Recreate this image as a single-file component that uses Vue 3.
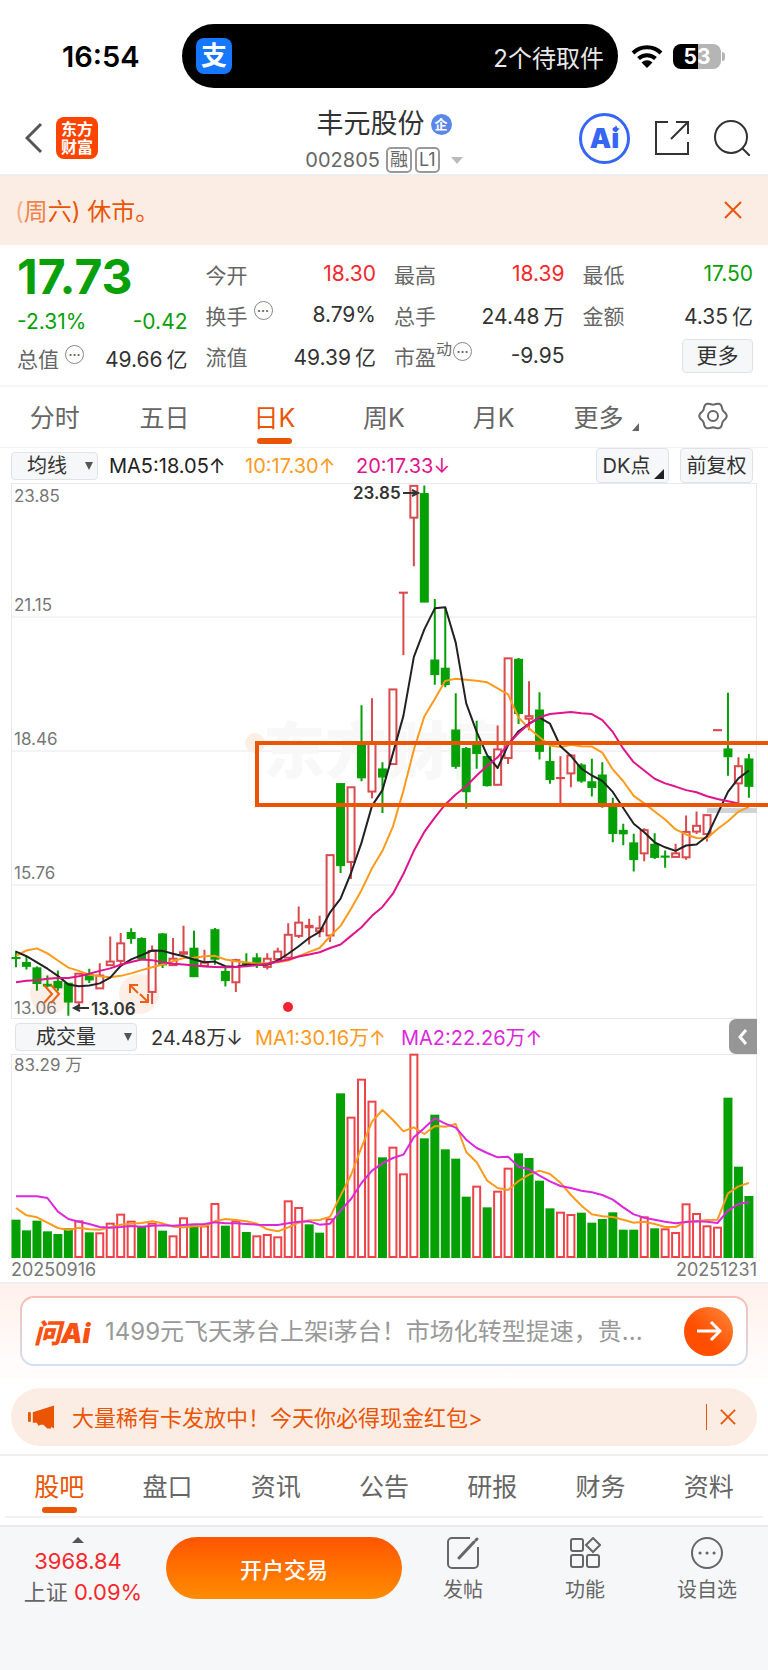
<template>
  <div class="page">
    <div class="status-bar">
      <span class="time">16:54</span>
      <div class="island">
        <span class="alipay">支</span>
        <span>2个待取件</span>
      </div>
      <svg class="wifi" viewBox="0 0 32 24">
        <path d="M2 9a20 20 0 0 1 28 0" />
        <path d="M7.500 14.500a12.500 12.500 0 0 1 17 0" />
        <path class="fill" d="M10.500 18.500a8 8 0 0 1 11 0L16 24z" />
      </svg>
      <div class="battery"><span>53</span></div>
    </div>

    <header class="nav">
      <div class="nav-side left">
        <button class="plain" aria-label="返回">
          <svg class="back" viewBox="0 0 18 32"><path d="M16 2 2 16l14 14" /></svg>
        </button>
        <div class="logo"><span>东方</span><span>财富</span></div>
      </div>
      <div class="nav-title">
        <h1>丰元股份<i class="badge">企</i></h1>
        <p>002805<span class="tag first">融</span><span class="tag">L1</span><i class="caret"></i></p>
      </div>
      <div class="nav-side right">
        <button class="plain ai" aria-label="Ai">
          <span>Ai</span>
          <svg viewBox="0 0 8 8"><path d="M4 0 5.200 2.800 8 4 5.200 5.200 4 8 2.800 5.200 0 4 2.800 2.800z" /></svg>
        </button>
        <button class="plain" aria-label="分享">
          <svg class="nav-icon" viewBox="0 0 36 36">
            <path d="M14 2H2v32h32V22M22 2h12v12M34 2 17 19" />
          </svg>
        </button>
        <button class="plain" aria-label="搜索">
          <svg class="nav-icon" viewBox="0 0 36 36">
            <circle cx="17" cy="17" r="16" /><path d="m28 28 8 8" />
          </svg>
        </button>
      </div>
    </header>

    <div class="notice">
      <p><span class="fade1">(</span><span class="fade2">周</span>六) 休市。</p>
      <button class="plain" aria-label="关闭">
        <svg class="close" viewBox="0 0 18 18"><path d="m1 1 16 16M17 1 1 17" /></svg>
      </button>
    </div>

    <section class="quote">
      <div class="quote-main">
        <strong>17.73</strong>
        <div class="cell green"><span>-2.31%</span><span>-0.42</span></div>
        <div class="cell">
          <label>总值<i class="dots">···</i></label>
          <span>49.66<b>亿</b></span>
        </div>
      </div>
      <div class="quote-grid">
        <div v-for="q in quotes" :key="q.label" class="cell">
          <label>{{ q.label }}<sup v-if="q.sup">{{ q.sup }}</sup><i v-if="q.dots" class="dots">···</i></label>
          <span :class="q.color">{{ q.value }}<b v-if="q.unit">{{ q.unit }}</b></span>
        </div>
        <button class="more">更多</button>
      </div>
    </section>

    <nav class="tabs period">
      <button v-for="t in periods" :key="t" class="plain" :class="{ active: t === period }" @click="period = t">
        {{ t }}<i v-if="t === '更多'" class="corner"></i>
      </button>
      <button class="plain" aria-label="设置">
        <svg class="gear" viewBox="0 0 30 30">
          <polygon :points="gear" />
          <circle cx="15" cy="15" r="5" />
        </svg>
      </button>
    </nav>

    <div class="legend">
      <div class="picker">
        <select aria-label="指标"><option>均线</option></select>
      </div>
      <span class="ma5">MA5:18.05↑</span>
      <span class="ma10">10:17.30↑</span>
      <span class="ma20">20:17.33↓</span>
      <div class="legend-buttons">
        <button class="dk">DK点<i class="corner"></i></button>
        <button>前复权</button>
      </div>
    </div>

    <svg class="kline" viewBox="0 0 746 536">
      <g class="grid">
        <path v-for="n in 3" :key="n" :d="`M0 ${n * 134}H746`" />
        <rect x="0.500" y="0.500" width="745" height="535" />
      </g>
      <circle class="halo" cx="244" cy="260" r="10" />
      <circle class="halo" cx="39" cy="511" r="20" />
      <circle class="halo" cx="128" cy="511" r="20" />
      <text class="watermark" x="252" y="291">东方财富</text>
      <rect class="gap-zone" x="696" y="325" width="50" height="5" />

      <g class="price">
        <text v-for="(p, n) in prices" :key="p" x="3" :y="priceY[n]">{{ p }}</text>
      </g>

      <g v-for="(c, i) in candles" :key="i" :class="c[0] === 'r' ? 'up' : 'down'">
        <path :d="`M${x(i)} ${y(c[1])}V${y(c[2])}M${x(i)} ${y(c[3])}V${y(c[4])}`" />
        <rect :x="x(i) - 3.500" :y="y(c[2])" width="7" :height="Math.max(y(c[3]) - y(c[2]), 0.100)" />
      </g>

      <polyline class="line10" :points="line(ma10, y)" />
      <polyline class="line5" :points="line(ma5, y)" />
      <polyline class="line20" :points="line(ma20, y)" />

      <g class="mark">
        <text x="342" y="16">23.85</text>
        <path d="M392 10h14m-5-3 6 3-6 3" />
        <text x="80" y="532">13.06</text>
        <path d="M78 525H64m5-3-6 3 6 3" />
      </g>
      <g class="tool">
        <path d="m33 502 8 9-8 9M40 502l8 9-8 9" />
        <path d="M119 510v-8h8M119 502l8 8M137 511v8h-8M137 519l-8-8" />
      </g>
      <circle class="event" cx="277" cy="524" r="5" />
      <path class="box" d="M757 260H246v62h511" />
    </svg>

    <div class="legend volume">
      <div class="picker wide">
        <select aria-label="副图指标"><option>成交量</option></select>
      </div>
      <span class="vol">24.48万↓</span>
      <span class="ma10">MA1:30.16万↑</span>
      <span class="vol-ma2">MA2:22.26万↑</span>
      <button class="collapse" aria-label="收起">
        <svg viewBox="0 0 10 16"><path d="M8 1 2 8l6 7" /></svg>
      </button>
    </div>

    <svg class="kline" viewBox="0 0 746 204">
      <g class="grid"><rect x="0.500" y="0.500" width="745" height="203" /></g>
      <text class="max" x="3" y="17">83.29 万</text>
      <g v-for="(v, i) in volumes" :key="i" :class="v[0] === 'r' ? 'vol-up' : 'vol-down'">
        <rect :x="x(i) - 3.500" :y="vy(v[1])" width="7" :height="203 - vy(v[1])" />
      </g>
      <polyline class="line10" :points="line(volMa1, vy)" />
      <polyline class="line-vol" :points="line(volMa2, vy)" />
    </svg>
    <div class="dates"><span>20250916</span><span>20251231</span></div>

    <section class="ask">
      <div class="ask-box">
        <span class="ask-logo">问Ai</span>
        <input type="text" aria-label="问Ai" placeholder="1499元飞天茅台上架i茅台！市场化转型提速，贵..." />
        <button aria-label="发送">
          <svg viewBox="0 0 26 22"><path d="M1 11h23M15 2l9 9-9 9" /></svg>
        </button>
      </div>
    </section>

    <div class="promo-wrap">
      <div class="promo">
        <svg class="horn" viewBox="0 0 28 24">
          <path d="M0 7h3v10H0zM5 7 27 0v24l-3-2v2h-4l-4-4h-3l-2 1-2-3H5z" />
        </svg>
        <a href="#">大量稀有卡发放中！今天你必得现金红包&gt;</a>
        <button class="plain" aria-label="关闭">
          <svg class="close small" viewBox="0 0 18 18"><path d="m1 1 16 16M17 1 1 17" /></svg>
        </button>
      </div>
    </div>

    <nav class="tabs info">
      <button v-for="t in infos" :key="t" class="plain" :class="{ active: t === info }" @click="info = t">{{ t }}</button>
    </nav>

    <footer class="bottom">
      <div class="index">
        <i class="tri"></i>
        <span class="red point">3968.84</span>
        <span>上证 <em class="red">0.09%</em></span>
      </div>
      <button class="trade">开户交易</button>
      <div class="actions">
        <button class="plain">
          <svg viewBox="0 0 32 32">
            <path d="M23 1H5a4 4 0 0 0-4 4v22a4 4 0 0 0 4 4h22a4 4 0 0 0 4-4V10" />
            <path class="pen" d="m12 21 15-16M29 3l1-1" />
          </svg>
          发帖
        </button>
        <button class="plain">
          <svg viewBox="0 0 32 32">
            <rect x="2" y="2" width="12" height="12" rx="2" />
            <rect x="2" y="18" width="12" height="12" rx="2" />
            <rect x="18" y="18" width="12" height="12" rx="2" />
            <path d="m24 1 7 7-7 7-7-7z" />
          </svg>
          功能
        </button>
        <button class="plain">
          <svg viewBox="0 0 32 32">
            <circle cx="16" cy="16" r="15" />
            <path class="pen" d="M9 16h.1M16 16h.1M23 16h.1" />
          </svg>
          设自选
        </button>
      </div>
    </footer>
  </div>
</template>

<script setup>
import { ref } from 'vue';

const period = ref('日K');
const info = ref('股吧');
const periods = ['分时', '五日', '日K', '周K', '月K', '更多'];
const infos = ['股吧', '盘口', '资讯', '公告', '研报', '财务', '资料'];

const quotes = [
  { label: '今开', value: '18.30', color: 'red' },
  { label: '最高', value: '18.39', color: 'red' },
  { label: '最低', value: '17.50', color: 'green' },
  { label: '换手', value: '8.79%', dots: true },
  { label: '总手', value: '24.48', unit: '万' },
  { label: '金额', value: '4.35', unit: '亿' },
  { label: '流值', value: '49.39', unit: '亿' },
  { label: '市盈', value: '-9.95', sup: '动', dots: true }
];

const prices = ['23.85', '21.15', '18.46', '15.76', '13.06'];
const priceY = [19, 128, 262, 396, 531];

// color, high, body top, body bottom, low
const candles = [
  ['g', 1318, 1338, 1338, 1364], ['g', 1334, 1352, 1360, 1370], ['g', 1362, 1367, 1408, 1430], ['g', 1387, 1413, 1415, 1420],
  ['g', 1373, 1405, 1420, 1430], ['g', 1408, 1410, 1460, 1500], ['r', 1381, 1382, 1462, 1475], ['g', 1368, 1386, 1398, 1408],
  ['r', 1353, 1387, 1423, 1424], ['r', 1278, 1348, 1358, 1359], ['r', 1268, 1297, 1346, 1357], ['g', 1255, 1268, 1282, 1298],
  ['g', 1280, 1285, 1338, 1340], ['r', 1303, 1318, 1433, 1467], ['g', 1268, 1272, 1356, 1366], ['r', 1282, 1340, 1358, 1359],
  ['r', 1248, 1322, 1326, 1330], ['g', 1262, 1312, 1389, 1391], ['r', 1315, 1351, 1360, 1361], ['g', 1254, 1260, 1340, 1357],
  ['g', 1362, 1377, 1400, 1418], ['r', 1340, 1344, 1406, 1433], ['g', 1325, 1355, 1357, 1360], ['g', 1325, 1339, 1351, 1366],
  ['r', 1325, 1340, 1363, 1370], ['r', 1309, 1320, 1341, 1342], ['r', 1241, 1273, 1337, 1338], ['r', 1194, 1239, 1276, 1282],
  ['r', 1228, 1248, 1252, 1300], ['r', 1220, 1255, 1263, 1280], ['r', 1049, 1050, 1275, 1293], ['g', 849, 851, 1078, 1100],
  ['r', 859, 860, 1069, 1117], ['g', 630, 738, 832, 843], ['r', 611, 737, 872, 891], ['g', 790, 810, 830, 932],
  ['r', 585, 586, 795, 796], ['r', 315, 315, 315, 490], ['r', 15, 16, 105, 241], ['g', 15, 39, 340, 342],
  ['g', 333, 505, 543, 573], ['g', 357, 528, 571, 580], ['g', 597, 701, 800, 808], ['g', 747, 753, 871, 920],
  ['g', 674, 743, 764, 808], ['g', 773, 775, 854, 858], ['r', 687, 754, 853, 854], ['r', 498, 499, 778, 795],
  ['g', 498, 503, 652, 683], ['r', 563, 661, 668, 700], ['g', 594, 645, 758, 782], ['g', 745, 789, 837, 850],
  ['r', 773, 834, 834, 905], ['r', 768, 771, 821, 860], ['g', 793, 799, 841, 847], ['g', 780, 846, 859, 886],
  ['g', 790, 827, 907, 917], ['g', 889, 914, 988, 1014], ['g', 962, 982, 989, 1022], ['g', 990, 1017, 1061, 1096],
  ['r', 975, 980, 1045, 1067], ['g', 989, 1021, 1055, 1061], ['g', 1037, 1054, 1054, 1085], ['r', 1018, 1045, 1055, 1056],
  ['r', 939, 985, 1056, 1063], ['r', 928, 968, 984, 991], ['r', 937, 938, 991, 1012], ['r', 700, 700, 700, 700],
  ['g', 595, 754, 773, 828], ['r', 776, 801, 849, 908], ['g', 767, 782, 856, 889]
];

const ma5 = [
  1320, 1333, 1350, 1368, 1388, 1412, 1417, 1415, 1409, 1393, 1360, 1342, 1330, 1317, 1318, 1326, 1333, 1342, 1350, 1348,
  1361, 1363, 1357, 1357, 1357, 1345, 1326, 1305, 1282, 1265, 1210, 1172, 1100, 1015, 912, 868, 765, 660, 495, 418,
  359, 356, 455, 625, 705, 770, 806, 742, 703, 682, 665, 682, 745, 772, 808, 827, 842, 873, 918, 962,
  986, 1014, 1028, 1038, 1023, 1020, 997, 935, 873, 835, 813
];
const ma10 = [
  1332, 1317, 1311, 1325, 1345, 1365, 1374, 1385, 1389, 1392, 1388, 1381, 1372, 1364, 1356, 1347, 1338, 1337, 1333, 1332,
  1342, 1347, 1350, 1354, 1352, 1350, 1345, 1333, 1321, 1310, 1277, 1248, 1200, 1148, 1087, 1038, 970, 870, 755, 662,
  613, 562, 556, 559, 562, 566, 583, 600, 665, 695, 720, 743, 747, 741, 745, 746, 763, 810, 843, 884,
  905, 928, 950, 978, 992, 1002, 1003, 977, 955, 928, 915
];
const ma20 = [
  1406, 1402, 1400, 1396, 1394, 1394, 1389, 1382, 1374, 1367, 1357, 1349, 1342, 1344, 1350, 1354, 1356, 1359, 1362, 1363,
  1364, 1363, 1361, 1358, 1355, 1348, 1342, 1334, 1328, 1322, 1310, 1300, 1276, 1252, 1220, 1195, 1158, 1103, 1038, 985,
  945, 908, 880, 857, 827, 800, 776, 740, 708, 683, 664, 655, 652, 649, 653, 655, 672, 705, 752, 790,
  813, 836, 849, 858, 868, 874, 885, 893, 899, 905
];

const volumes = [
  ['g', 630], ['g', 662], ['g', 633], ['g', 665], ['g', 673], ['g', 656], ['r', 632], ['g', 668], ['r', 668], ['r', 639],
  ['r', 612], ['r', 633], ['g', 652], ['r', 639], ['g', 663], ['r', 677], ['r', 623], ['g', 647], ['r', 647], ['r', 580],
  ['g', 648], ['r', 632], ['g', 667], ['r', 677], ['r', 673], ['r', 680], ['r', 572], ['r', 592], ['g', 644], ['g', 669],
  ['r', 626], ['g', 251], ['r', 321], ['r', 207], ['r', 273], ['g', 443], ['r', 411], ['r', 491], ['r', 132], ['g', 386],
  ['g', 315], ['g', 419], ['g', 447], ['g', 561], ['r', 528], ['g', 593], ['r', 543], ['r', 474], ['g', 431], ['g', 445],
  ['g', 513], ['g', 596], ['r', 606], ['r', 613], ['g', 609], ['g', 639], ['g', 628], ['g', 608], ['g', 660], ['g', 660],
  ['r', 620], ['g', 656], ['r', 656], ['r', 667], ['r', 581], ['r', 610], ['r', 647], ['r', 651], ['g', 264], ['g', 471],
  ['g', 559]
];
const volMa1 = [
  592, 614, 620, 636, 652, 658, 651, 656, 657, 650, 642, 639, 637, 632, 638, 648, 650, 647, 647, 632,
  625, 628, 632, 639, 656, 662, 650, 636, 629, 628, 618, 555, 493, 410, 333, 298, 328, 362, 350, 370,
  346, 348, 340, 424, 455, 510, 532, 538, 511, 492, 480, 490, 516, 553, 585, 611, 617, 619, 627, 636,
  633, 640, 649, 649, 633, 632, 628, 627, 548, 527, 517
];
const volMa2 = [
  557, 557, 557, 562, 603, 625, 633, 640, 649, 651, 649, 646, 648, 645, 644, 645, 643, 641, 640, 635,
  638, 638, 640, 642, 643, 643, 638, 633, 632, 642, 639, 600, 565, 517, 480, 458, 442, 432, 380, 352,
  323, 339, 351, 387, 412, 427, 440, 438, 468, 476, 495, 512, 526, 532, 540, 545, 553, 567, 590, 611,
  621, 627, 633, 638, 634, 632, 633, 637, 600, 580, 574
];

const x = (i) => 5 + i * 10.47;
const y = (v) => (v - 8) / 2.8;
const vy = (v) => (v - 130) / 3;
const line = (values, scale) => values.map((v, i) => `${x(i)},${scale(v)}`).join(' ');

// six rounded teeth
const gear = Array.from({ length: 72 }, (_, i) => {
  const a = (i / 36) * Math.PI;
  const r = 12.5 + 1.2 * Math.cos(6 * a);
  return `${(15 + r * Math.cos(a)).toFixed(2)},${(15 + r * Math.sin(a)).toFixed(2)}`;
}).join(' ');
</script>

<style>
body {
  margin: 0;
  background: #f6f7f9;
}
</style>

<style scoped>
.page {
  font-family: Inter, 'Noto Sans CJK SC', sans-serif;
  color: #333;
  background: #fff;
  overflow-x: clip;
}
.page * {
  box-sizing: border-box;
}
button,
select,
input {
  font-family: inherit;
  color: inherit;
}
button {
  padding: 0;
  cursor: pointer;
}
.plain {
  border: 0;
  background: none;
  display: flex;
  align-items: center;
  justify-content: center;
}
svg {
  display: block;
  fill: none;
}
p,
h1 {
  margin: 0;
}
i,
em {
  font-style: normal;
}
.red {
  color: #f5282d;
}
.green {
  color: #08a008;
}

/* status bar */
.status-bar {
  display: flex;
  align-items: center;
  height: 96px;
  padding: 16px 47px 0 62px;
}
.time {
  width: 120px;
  font-size: 29px;
  font-weight: 600;
  color: #000;
}
.island {
  flex: 1;
  display: flex;
  align-items: center;
  justify-content: space-between;
  height: 64px;
  padding: 0 14px;
  border-radius: 32px;
  background: #000;
  color: #e8e8e8;
  font-size: 24px;
}
.alipay {
  width: 36px;
  height: 36px;
  border-radius: 8px;
  background: #1677ff;
  color: #fff;
  font-size: 26px;
  font-weight: 700;
  line-height: 35px;
  text-align: center;
}
.wifi {
  width: 32px;
  height: 24px;
  margin: 0 10px 0 13px;
  stroke: #000;
  stroke-width: 4;
}
.wifi .fill {
  fill: #000;
  stroke: none;
}
.battery {
  position: relative;
  width: 48px;
  height: 25px;
  border-radius: 8px;
  background: linear-gradient(90deg, #000 53%, #b5b5b5 53%);
  color: #fff;
  font-size: 21px;
  font-weight: 700;
  line-height: 25px;
  text-align: center;
}
.battery::after {
  content: '';
  position: absolute;
  right: -4px;
  top: 8px;
  width: 3px;
  height: 9px;
  border-radius: 0 3px 3px 0;
  background: #b5b5b5;
}

/* nav */
.nav {
  display: grid;
  grid-template-columns: 1fr auto 1fr;
  align-items: center;
  height: 80px;
  padding: 2px 18px 0;
  border-bottom: 2px solid #eee;
}
.nav-side {
  display: flex;
  align-items: center;
}
.nav-side.left {
  gap: 13px;
  padding-left: 7px;
}
.nav-side.right {
  justify-content: flex-end;
  gap: 24px;
}
.back {
  width: 18px;
  height: 32px;
  stroke: #555;
  stroke-width: 3;
}
.logo {
  display: flex;
  flex-direction: column;
  justify-content: center;
  width: 42px;
  height: 42px;
  border-radius: 8px;
  background: #ff4400;
  color: #fff;
  font-size: 16px;
  font-weight: 700;
  line-height: 18px;
  text-align: center;
}
.nav-title {
  padding-top: 8px;
}
.nav-title h1 {
  display: flex;
  align-items: center;
  justify-content: center;
  gap: 6px;
  font-size: 27px;
  font-weight: 400;
  line-height: 36px;
}
.badge {
  width: 21px;
  height: 21px;
  border-radius: 50%;
  background: #5b87e8;
  color: #fff;
  font-size: 13px;
  font-weight: 700;
  line-height: 20px;
  text-align: center;
}
.nav-title p {
  display: flex;
  align-items: center;
  color: #666;
  font-size: 20px;
  line-height: 36px;
}
.tag {
  height: 26px;
  margin-left: 3px;
  padding: 0 2px;
  border: 2px solid #999;
  border-radius: 5px;
  font-size: 18px;
  line-height: 22px;
}
.tag.first {
  margin-left: 6px;
}
.caret {
  margin-left: 11px;
  border: 6px solid transparent;
  border-top: 7px solid #bbb;
  border-bottom: 0;
}
.ai {
  position: relative;
  width: 51px;
  height: 51px;
  border: 3px solid #3566f6;
  border-radius: 50%;
  color: #3566f6;
  font-size: 27px;
  font-weight: 900;
}
.ai svg {
  position: absolute;
  top: 9px;
  right: 7px;
  width: 8px;
  height: 8px;
  fill: #3566f6;
}
.nav-icon {
  width: 36px;
  height: 36px;
  stroke: #333;
  stroke-width: 2;
}

/* notice */
.notice {
  display: flex;
  align-items: center;
  justify-content: space-between;
  height: 69px;
  padding: 0 26px 2px 15px;
  background: #fcede4;
  color: #ea5504;
  font-size: 24px;
}
.fade1 {
  opacity: 0.4;
}
.fade2 {
  opacity: 0.7;
}
.close {
  width: 18px;
  height: 18px;
  stroke: #ea5504;
  stroke-width: 2;
}
.close.small {
  width: 16px;
  height: 16px;
}

/* quote */
.quote {
  display: grid;
  grid-template-columns: calc((100% - 54px) / 4) 1fr;
  gap: 18px;
  height: 142px;
  padding: 8px 15px 0 17px;
  border-bottom: 2px solid #f5f5f5;
}
.quote-main {
  display: flex;
  flex-direction: column;
}
.quote-main strong {
  height: 48px;
  color: #08a008;
  font-size: 48px;
  font-weight: 700;
  line-height: 48px;
}
.quote-main .cell {
  height: 32px;
}
.quote-main .green {
  height: 41px;
}
.quote-grid {
  display: grid;
  grid-template-columns: repeat(3, 1fr);
  grid-template-rows: repeat(3, 41px);
  column-gap: 18px;
}
.cell {
  display: flex;
  align-items: center;
  justify-content: space-between;
  font-size: 21px;
  white-space: nowrap;
}
.cell b {
  margin-left: 4px;
  font-weight: 400;
}
.cell label {
  display: flex;
  align-items: center;
  color: #666;
}
.cell sup {
  margin-bottom: 14px;
  font-size: 16px;
  line-height: 16px;
}
.dots {
  width: 19px;
  height: 19px;
  margin: 0 0 8px 6px;
  border: 1px solid #888;
  border-radius: 50%;
  font-size: 12px;
  font-weight: 700;
  line-height: 17px;
  text-align: center;
}
sup + .dots {
  margin-left: 1px;
}
.more {
  justify-self: end;
  align-self: center;
  width: 71px;
  height: 34px;
  border: 1px solid #dfe3e8;
  border-radius: 4px;
  background: #f6f7f9;
  font-size: 21px;
  line-height: 30px;
}

/* tabs */
.tabs {
  display: grid;
  grid-template-columns: repeat(7, 1fr);
  color: #666;
}
.tabs button {
  position: relative;
  padding-bottom: 2px;
  font-size: 25px;
}
.tabs .active {
  color: #ea5504;
}
.tabs .active::after {
  content: '';
  position: absolute;
  bottom: 3px;
  left: calc(50% - 17px);
  width: 35px;
  height: 6px;
  border-radius: 3px;
  background: #ea5504;
}
.period {
  height: 61px;
  border-bottom: 1px solid #f2f2f2;
}
.period .corner {
  align-self: flex-end;
  margin: 0 -6px 14px 9px;
}
.corner {
  border-left: 7px solid transparent;
  border-bottom: 8px solid #666;
}
.gear {
  width: 30px;
  height: 30px;
  stroke: #666;
  stroke-width: 2;
}

/* chart legend */
.legend {
  display: flex;
  align-items: center;
  height: 35px;
  margin: 0 11px;
  font-size: 20px;
  white-space: nowrap;
}
.picker {
  position: relative;
  width: 87px;
  margin-right: 11px;
}
.picker::after {
  content: '';
  position: absolute;
  top: 10px;
  right: 5px;
  border: 4px solid transparent;
  border-top: 8px solid #555;
  border-bottom: 0;
}
.picker select {
  appearance: none;
  display: block;
  width: 100%;
  height: 28px;
  padding: 0 0 0 15px;
  border: 1px solid #dfe3e8;
  border-radius: 4px;
  background: #f6f7f9;
  font-size: 20px;
  line-height: 26px;
}
.picker.wide {
  width: 122px;
  margin: 0 14px 0 4px;
}
.wide select {
  padding-left: 20px;
}
.ma5 {
  width: 136px;
  color: #222;
}
.ma10 {
  width: 111px;
  color: #fb9a1c;
}
.ma20 {
  color: #e0148c;
}
.vol {
  width: 104px;
}
.volume .ma10 {
  width: 146px;
}
.vol-ma2 {
  color: #dc28dc;
}
.legend-buttons {
  display: flex;
  gap: 11px;
  margin: 0 4px 0 auto;
}
.legend-buttons button {
  position: relative;
  width: 73px;
  height: 35px;
  border: 1px solid #dfe3e8;
  border-radius: 4px;
  background: #f6f7f9;
  font-size: 20px;
  line-height: 30px;
}
.legend-buttons .dk {
  padding-right: 12px;
}
.dk .corner {
  position: absolute;
  right: 4px;
  bottom: 3px;
  border-left-width: 10px;
  border-bottom: 10px solid #222;
}
.collapse {
  display: flex;
  align-items: center;
  justify-content: center;
  width: 28px;
  height: 35px;
  margin-left: auto;
  border: 0;
  border-radius: 7px 0 0 7px;
  background: #969696;
}
.collapse svg {
  width: 10px;
  height: 16px;
  stroke: #fff;
  stroke-width: 3;
}

/* charts */
.kline {
  width: calc(100% - 22px);
  margin: 0 11px;
  overflow: visible;
}
.grid {
  stroke: #e8e8f0;
}
.halo {
  fill: #fdeee6;
}
.watermark {
  fill: #f8f8f8;
  font-size: 62px;
  font-weight: 900;
}
.gap-zone {
  fill: #cfd2d9;
}
.price,
.max {
  fill: #777;
  font-size: 17px;
}
.up,
.down,
.vol-up,
.vol-down {
  stroke-width: 2;
}
.up {
  stroke: #d94a4e;
}
.up rect {
  fill: #fff;
}
.down {
  stroke: #05a005;
  fill: #05a005;
}
.vol-up {
  stroke: #ee4348;
  fill: #fff;
}
.vol-down {
  stroke: #05a005;
  fill: #05a005;
}
polyline {
  stroke-width: 2;
  stroke-linejoin: round;
}
.line5 {
  stroke: #222;
}
.line10 {
  stroke: #fb9a1c;
}
.line20 {
  stroke: #e0148c;
}
.line-vol {
  stroke: #dc28dc;
}
.mark {
  stroke: #333;
  stroke-width: 2;
}
.mark text {
  fill: #333;
  stroke: none;
  font-size: 17px;
  font-weight: 600;
}
.tool {
  stroke: #f0600f;
  stroke-width: 2;
}
.event {
  fill: #f5222d;
}
.box {
  stroke: #ea5504;
  stroke-width: 4;
}
.dates {
  display: flex;
  justify-content: space-between;
  height: 26px;
  padding: 0 11px;
  border-bottom: 2px solid #eee;
  color: #777;
  font-size: 18px;
  line-height: 23px;
}

/* ask */
.ask {
  padding: 12px 20px 22px;
  background: linear-gradient(#fff1ec, #fff);
}
.ask-box {
  display: flex;
  align-items: center;
  height: 70px;
  padding: 0 13px 0 12px;
  border: 2px solid transparent;
  border-radius: 14px;
  background: linear-gradient(#fff, #fff) padding-box, linear-gradient(#fbbdb2, #d3def5) border-box;
}
.ask-logo {
  width: 71px;
  color: #fa5010;
  font-size: 27px;
  font-style: italic;
  font-weight: 900;
}
.ask-box input {
  flex: 1;
  min-width: 0;
  padding: 0;
  border: 0;
  outline: 0;
  background: none;
  font-size: 24px;
}
.ask-box input::placeholder {
  color: #999;
  opacity: 1;
}
.ask-box button {
  display: flex;
  align-items: center;
  justify-content: center;
  width: 49px;
  height: 49px;
  border: 0;
  border-radius: 50%;
  background: linear-gradient(45deg, #ff4e00 40%, #ff8a3c);
}
.ask-box button svg {
  width: 26px;
  height: 22px;
  stroke: #fff;
  stroke-width: 3;
}

/* promo */
.promo-wrap {
  padding: 0 11px 8px;
  border-bottom: 2px solid #f0f0f0;
}
.promo {
  display: flex;
  align-items: center;
  height: 58px;
  padding: 0 21px 0 17px;
  border-radius: 29px;
  background: #fcede4;
}
.horn {
  width: 27px;
  height: 24px;
  margin-right: 17px;
  fill: #ea5504;
}
.promo a {
  padding-bottom: 3px;
  color: #ea5504;
  font-size: 22px;
  text-decoration: none;
}
.promo button {
  height: 26px;
  margin-left: auto;
  padding-left: 13px;
  border-left: 1px solid #ea5504;
}

.info {
  height: 62px;
  margin: 0 5px 7px;
  border-bottom: 2px solid #f2f2f2;
}

/* bottom bar */
.bottom {
  display: flex;
  align-items: flex-start;
  height: 146px;
  padding: 10px 0 0;
  border-top: 2px solid #ebe8ec;
  background: #f6f7f9;
  color: #666;
}
.index {
  display: flex;
  flex-direction: column;
  align-items: center;
  width: 166px;
  font-size: 22px;
  line-height: 31px;
}
.point {
  margin: 3px 10px 0 0;
}
.tri {
  margin-right: 10px;
  border: 6px solid transparent;
  border-top: 0;
  border-bottom: 6px solid #555;
}
.trade {
  width: 236px;
  height: 62px;
  border: 0;
  border-radius: 31px;
  background: linear-gradient(#ff5500, #ff8c00);
  color: #fff;
  font-size: 22px;
  font-weight: 500;
}
.actions {
  flex: 1;
  display: grid;
  grid-template-columns: repeat(3, 1fr);
}
.actions button {
  flex-direction: column;
  gap: 6px;
  font-size: 20px;
  line-height: 30px;
}
.actions svg {
  width: 32px;
  height: 32px;
  stroke: #666;
  stroke-width: 2;
}
.actions .pen {
  stroke-width: 3;
  stroke-linecap: round;
}
</style>
